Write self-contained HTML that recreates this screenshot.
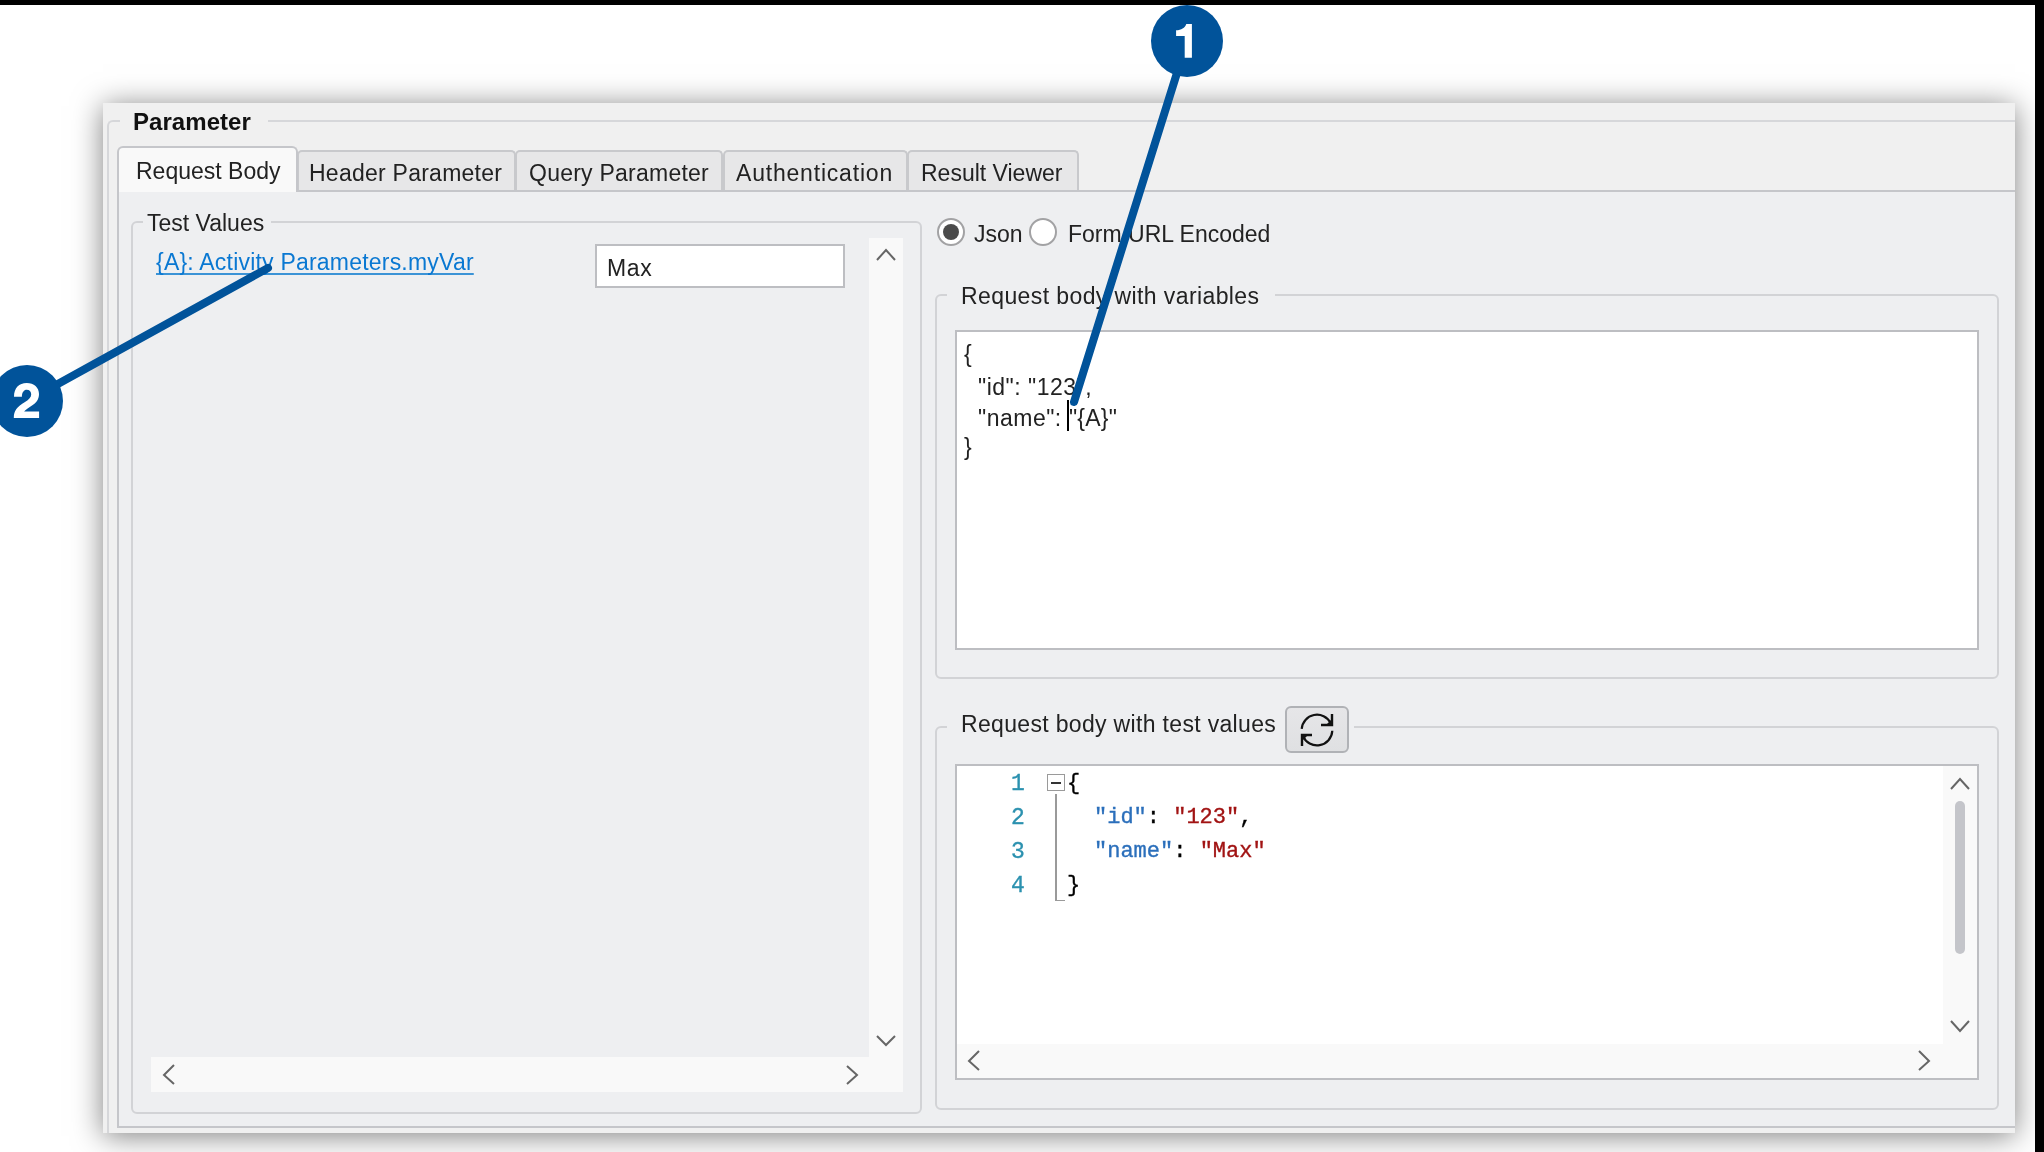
<!DOCTYPE html>
<html><head><meta charset="utf-8">
<style>
*{box-sizing:border-box;margin:0;padding:0}
html,body{width:2044px;height:1152px;overflow:hidden;background:#fff;position:relative}
body{font-family:"Liberation Sans",sans-serif;font-size:23px;color:#222}
.a{position:absolute}
.t{position:absolute;white-space:pre;line-height:1;will-change:transform}
#win{left:103px;top:103px;width:1912px;height:1030px;background:#f0f0f0;box-shadow:0 3px 28px rgba(0,0,0,.5);overflow:hidden}
.mono{font-family:"Liberation Mono",monospace;font-size:22px;-webkit-text-stroke:0.35px currentColor}
</style></head><body>
<div class="a" style="left:0;top:0;width:2044px;height:5px;background:#000"></div>
<div class="a" style="left:2035px;top:0;width:9px;height:1152px;background:#000"></div>

<div id="win" class="a">
</div>

<!-- everything in page coordinates -->
<div class="a" style="left:103px;top:103px;width:1912px;height:1030px;overflow:hidden">
 <div class="a" style="left:-103px;top:-103px;width:2044px;height:1152px">
  <!-- Parameter group box -->
  <div class="a" style="left:107px;top:120px;width:2000px;height:1100px;border-left:2px solid #d6d7da;border-top:2px solid #d6d7da;border-top-left-radius:6px"></div>
  <div class="a" style="left:120px;top:108px;width:148px;height:24px;background:#f0f0f0"></div>
  <div class="t" style="left:133px;top:109.5px;font-weight:700;font-size:24px;color:#111;letter-spacing:0.05px">Parameter</div>

  <!-- tab panel -->
  <div class="a" style="left:117px;top:190px;width:2001px;height:938px;background:#eeeff1;border:2px solid #c5c6ca"></div>
  <!-- tabs -->
  <div class="a" style="left:297px;top:150px;width:219px;height:40px;background:#e7e7e8;border:2px solid #c8c9cc;border-bottom:none;border-radius:5px 5px 0 0"></div>
  <div class="a" style="left:515px;top:150px;width:208px;height:40px;background:#e7e7e8;border:2px solid #c8c9cc;border-bottom:none;border-radius:5px 5px 0 0"></div>
  <div class="a" style="left:723px;top:150px;width:185px;height:40px;background:#e7e7e8;border:2px solid #c8c9cc;border-bottom:none;border-radius:5px 5px 0 0"></div>
  <div class="a" style="left:907px;top:150px;width:172px;height:40px;background:#e7e7e8;border:2px solid #c8c9cc;border-bottom:none;border-radius:5px 5px 0 0"></div>
  <div class="a" style="left:117px;top:146px;width:181px;height:46px;background:#f9f9f9;border:2px solid #c5c6ca;border-bottom:none;border-radius:6px 6px 0 0"></div>
  <div class="t" style="left:136px;top:160px">Request Body</div>
  <div class="t" style="left:309px;top:162px;letter-spacing:0.25px">Header Parameter</div>
  <div class="t" style="left:529px;top:162px;letter-spacing:0.24px">Query Parameter</div>
  <div class="t" style="left:736px;top:162px;letter-spacing:0.8px">Authentication</div>
  <div class="t" style="left:921px;top:162px">Result Viewer</div>

  <!-- Test Values group -->
  <div class="a" style="left:131px;top:221px;width:791px;height:893px;border:2px solid #d2d3d6;border-radius:6px"></div>
  <div class="a" style="left:143px;top:210px;width:128px;height:22px;background:#eeeff1"></div>
  <div class="t" style="left:147px;top:212px">Test Values</div>
  <div class="t" style="left:156px;top:251px;color:#0a78d2;text-decoration:underline;text-decoration-skip-ink:none;text-underline-offset:3px;text-decoration-color:#3b93d6;letter-spacing:0.21px">{A}: Activity Parameters.myVar</div>
  <div class="a" style="left:595px;top:244px;width:250px;height:44px;background:#fff;border:2px solid #bdbec2"></div>
  <div class="t" style="left:607px;top:257px;letter-spacing:0.6px">Max</div>
  <!-- left scrollbars -->
  <div class="a" style="left:869px;top:238px;width:34px;height:854px;background:#f9f9f9"></div>
  <div class="a" style="left:151px;top:1057px;width:718px;height:35px;background:#f9f9f9"></div>

  <!-- right: radios -->
  <div class="a" style="left:937px;top:218px;width:28px;height:28px;border-radius:50%;border:2px solid #a2a2a4;background:#fff"></div>
  <div class="a" style="left:943px;top:224px;width:16px;height:16px;border-radius:50%;background:#4b4b4b"></div>
  <div class="t" style="left:974px;top:223px">Json</div>
  <div class="a" style="left:1029px;top:218px;width:28px;height:28px;border-radius:50%;border:2px solid #a2a2a4;background:#fff"></div>
  <div class="t" style="left:1068px;top:223px">Form URL Encoded</div>

  <!-- group 1 -->
  <div class="a" style="left:935px;top:294px;width:1064px;height:385px;border:2px solid #d2d3d6;border-radius:6px"></div>
  <div class="a" style="left:947px;top:284px;width:328px;height:22px;background:#eeeff1"></div>
  <div class="t" style="left:961px;top:285px;letter-spacing:0.4px">Request body with variables</div>
  <div class="a" style="left:955px;top:330px;width:1024px;height:320px;background:#fff;border:2px solid #bdbec2"></div>
  <div class="t" style="left:964px;top:343px">{</div>
  <div class="t" style="left:978px;top:376px;letter-spacing:0.5px">"id": "123",</div>
  <div class="t" style="left:978px;top:407px;letter-spacing:0.5px">"name":</div>
  <div class="t" style="left:1069px;top:407px;letter-spacing:0.2px">"{A}"</div>
  <div class="t" style="left:964px;top:436px">}</div>
  <div class="a" style="left:1067px;top:400px;width:2px;height:31px;background:#000"></div>

  <!-- group 2 -->
  <div class="a" style="left:935px;top:726px;width:1064px;height:384px;border:2px solid #d2d3d6;border-radius:6px"></div>
  <div class="a" style="left:947px;top:706px;width:407px;height:48px;background:#eeeff1"></div>
  <div class="t" style="left:961px;top:713px;letter-spacing:0.33px">Request body with test values</div>
  <div class="a" style="left:1285px;top:706px;width:64px;height:47px;background:linear-gradient(#e6e6e8,#dfe0e2);border:2px solid #b0b2b6;border-radius:6px"></div>
  <div class="a" style="left:955px;top:764px;width:1024px;height:316px;background:#fff;border:2px solid #bdbec2"></div>
  <div class="a" style="left:1943px;top:766px;width:34px;height:278px;background:#f9f9f9"></div>
  <div class="a" style="left:957px;top:1044px;width:1020px;height:34px;background:#f9f9f9"></div>
  <div class="a" style="left:1955px;top:801px;width:10px;height:153px;border-radius:5px;background:#c4c5ca"></div>
  <div class="t mono" style="left:1011px;top:773px;color:#2b91af;font-size:23px">1</div>
  <div class="t mono" style="left:1011px;top:807px;color:#2b91af;font-size:23px">2</div>
  <div class="t mono" style="left:1011px;top:841px;color:#2b91af;font-size:23px">3</div>
  <div class="t mono" style="left:1011px;top:875px;color:#2b91af;font-size:23px">4</div>
  <div class="t mono" style="left:1067px;top:773px;color:#000">{</div>
  <div class="t mono" style="left:1094px;top:807px;color:#000"><span style="color:#2b6fbb">"id"</span>: <span style="color:#a11313">"123"</span>,</div>
  <div class="t mono" style="left:1094px;top:841px;color:#000"><span style="color:#2b6fbb">"name"</span>: <span style="color:#a11313">"Max"</span></div>
  <div class="t mono" style="left:1067px;top:875px;color:#000">}</div>
  <div class="a" style="left:1047px;top:774px;width:18px;height:17px;border:1.5px solid #9a9a9a;background:#fff"></div>
  <div class="a" style="left:1051px;top:782px;width:10px;height:1.6px;background:#333"></div>
  <div class="a" style="left:1055px;top:794px;width:1.6px;height:107px;background:#9a9a9a"></div>
  <div class="a" style="left:1055px;top:899.5px;width:10px;height:1.6px;background:#9a9a9a"></div>

  <svg class="a" style="left:0;top:0" width="2044" height="1152" viewBox="0 0 2044 1152">
   <g fill="none" stroke="#666" stroke-width="2">
    <polyline points="877,260 886,250 895,260"/>
    <polyline points="877,1036 886,1045 895,1036"/>
    <polyline points="174,1065 164,1075 174,1084"/>
    <polyline points="847,1066 857,1075 847,1084"/>
    <polyline points="1951,789 1960,779 1969,789"/>
    <polyline points="1951,1021 1960,1031 1969,1021"/>
    <polyline points="979,1051 969,1061 979,1070"/>
    <polyline points="1919,1051 1929,1061 1919,1070"/>
   </g>
   <!-- refresh icon -->
   <g fill="none" stroke="#111" stroke-width="2.2">
    <path d="M1301.7,728.9 A15.3,15.3 0 0 1 1330.6,723.1"/>
    <path d="M1332.3,730.8 A15.3,15.3 0 0 1 1302.9,736.0"/>
   </g>
   <g fill="none" stroke="#111" stroke-width="2.4" stroke-linejoin="miter">
    <polyline points="1332,714 1332,725 1321,725"/>
    <polyline points="1302,746 1302,735 1312,735"/>
   </g>
   <polygon fill="#111" points="1333,718 1333,726 1325,726"/>
   <polygon fill="#111" points="1301,742 1301,734 1309,734"/>
  </svg>
 </div>
</div>
<svg class="a" style="left:0;top:0" width="2044" height="1152" viewBox="0 0 2044 1152">
   <!-- callouts -->
   <g stroke="#01539a" stroke-width="8" stroke-linecap="round">
    <line x1="1187" y1="41" x2="1074" y2="402"/>
    <line x1="27" y1="401" x2="268" y2="268"/>
   </g>
   <circle cx="1187" cy="41" r="36" fill="#01539a"/>
   <circle cx="27" cy="401" r="36" fill="#01539a"/>
   <path fill="#fff" d="M1191.9,23.9 L1186.3,23.9 C1184.8,27.8 1181.5,30.2 1176.1,30.2 L1176.1,36 L1184.7,36 L1184.7,57.7 L1191.9,57.7 Z"/>
   <path fill="#fff" d="M13.8,418 L39.1,418 L39.1,411.5 L24.1,411.5 C26,409.5 29,407.5 32,405.5 C36,403 39,399.5 39,394 C39,387.5 34,383 26.7,383 C19,383 14,388 14,396.7 L21.9,396.7 C21.9,392.5 24,389.8 26.7,389.8 C29.5,389.8 31.2,391.8 31.2,394.3 C31.2,397.5 29,399.5 25,402 C17,407 13.8,410.5 13.8,418 Z"/>
</svg>
</body></html>
